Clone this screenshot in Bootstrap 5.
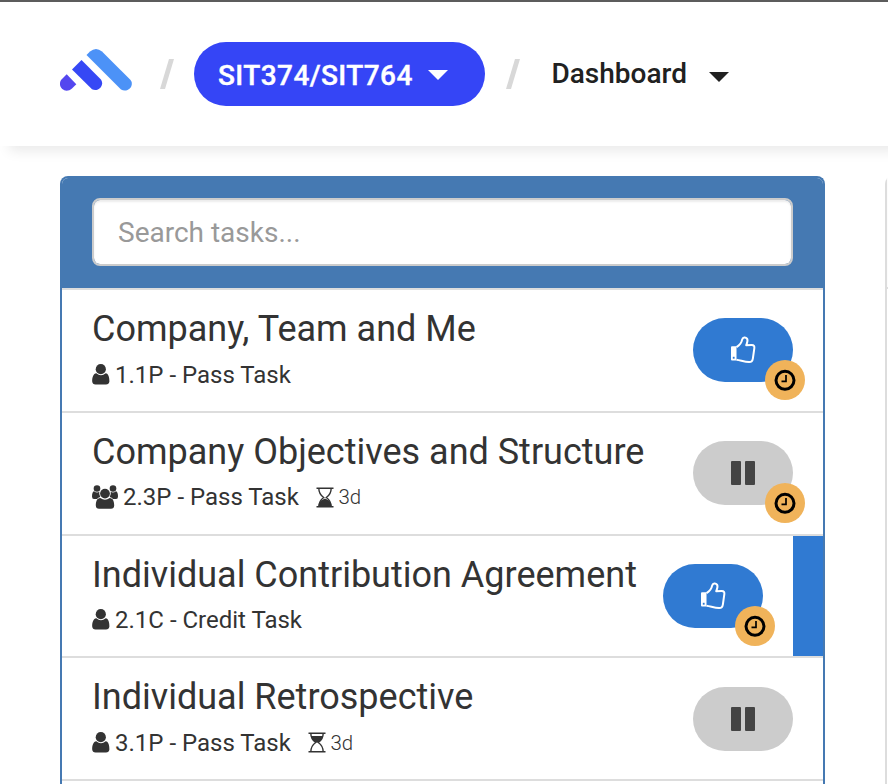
<!DOCTYPE html>
<html lang="en">
<head>
<meta charset="utf-8">
<meta name="viewport" content="width=device-width, initial-scale=1">
<title>Dashboard</title>
<link href="https://cdn.jsdelivr.net/npm/bootstrap@5.3.0/dist/css/bootstrap.min.css" rel="stylesheet">
<style>
body{font-family:Roboto,sans-serif;color:#333;background:#fff;height:784px;overflow:hidden}
.topbar{height:146px;border-top:2px solid #5c5c5c;padding-left:60px;margin-right:-20px;box-shadow:0 14px 12px -9px rgba(0,0,0,.085)}
.logo{margin-top:-9px}
.unit{width:291px;height:64px;background:#3545f6;color:#fff;border-radius:32px;padding-left:24px;margin-left:20px;margin-right:19px;border:0;font-size:28px;font-weight:500}
.unit-name{-webkit-text-stroke:.4px #fff;letter-spacing:.4px;padding-top:3px}
.unit svg{margin-left:15px;margin-top:1px}
.view{font-size:28px;font-weight:500;color:#212121;margin-left:31.5px}
.view svg{margin-left:22px;margin-top:6px}
.panel{width:765px;height:608px;overflow:hidden;border:2px solid #4579b2;border-bottom:0;border-radius:8px 8px 0 0;margin:30px 0 0 60px}
.panel-top{height:110px;background:#4579b2;padding:20px 30px 0}
.search{height:68px;border:2px solid #ccc;border-radius:8px;padding:0 24px;font-size:28px;box-shadow:inset 0 2px 2px rgba(0,0,0,.075)!important;line-height:64px}
.search::placeholder{color:#999}
.task{height:122.75px;border-top:2px solid #ddd;padding:0 30px}
.task.active{background:linear-gradient(#307ad2,#307ad2) right/30px 100% no-repeat;padding-right:60px}
.task-edge{border-top:2px solid #ddd}
.title{font-size:36px;line-height:40px;margin:19px 0 0;font-weight:400;white-space:nowrap}
.sub{font-size:24px;line-height:34px;margin-top:8.6px;height:34px;white-space:nowrap}
.code{margin-left:5px}
.glass{margin-left:17px}
.due{font-size:20.4px;font-weight:300;margin-left:4.5px}
.state{width:100px;height:64px;border-radius:32px;margin-top:28.3px;background:#307ad2}
.state.hold{background:#ccc}
.clock{left:72px;top:42px}
.side{width:40px;height:608px;margin:30px 0 0 60px;border:2px solid #ddd;border-bottom:0;border-radius:8px 8px 0 0}
.side div{height:111px;border-bottom:2px solid #ddd;background:#fcfcfc}
</style>
<script src="https://cdn.jsdelivr.net/npm/bootstrap@5.3.0/dist/js/bootstrap.bundle.min.js"></script>
</head>
<body>
<svg class="d-none">
<symbol id="thumb" viewBox="0 0 26 28"><path d="M2 10.300H6.500V24.400H2Q1 24.400 1 23.400V11.300Q1 10.300 2 10.300Z" fill="#fff"/><rect x="2.800" y="20.800" width="1.800" height="1.900" fill="#307ad2"/><path d="M6.500 11.200C10 9 11.600 6.800 12.100 3.700C12.600 1.200 15.700 .9 17 2.700C18.500 4.800 16.700 7.200 16.200 9.300L21.500 9C24 8.900 24.700 10.200 24.300 12.300L22.900 22.300C22.600 24.800 21.500 26.100 19 26C14.700 25.900 10.700 24.300 6.500 23.700" fill="none" stroke="#fff" stroke-width="2" stroke-linejoin="round"/></symbol>
<symbol id="clock" viewBox="0 0 40 40"><circle cx="20" cy="20" r="20" fill="#f0b35a"/><circle cx="20" cy="20.300" r="9" fill="none" stroke="#000" stroke-width="3"/><path d="M21 15V21.400H16.500" fill="none" stroke="#000" stroke-width="1.700"/></symbol>
<symbol id="pause" viewBox="0 0 24 24"><rect width="10" height="24" rx="1" fill="#444"/><rect x="14" width="10" height="24" rx="1" fill="#444"/></symbol>
<symbol id="user" viewBox="0 0 18 22"><path d="M4.300 9.300Q9 13 13.700 9.300C16.500 9.600 17.500 13.500 17.400 17.500Q17 20.500 14 20.500H3.500Q.5 20.500 .2 17.500C.1 13.500 1.300 9.500 4.300 9.300Z" fill="#333"/><circle cx="8.800" cy="5.200" r="5.100" fill="#333"/></symbol>
<symbol id="users" viewBox="0 0 26 24"><g fill="#333"><circle cx="5" cy="3.500" r="3.300"/><circle cx="21" cy="3.500" r="3.300"/><path d="M2 6.300Q5 8.500 7.300 6.800Q6.700 9.500 8.300 12Q6 12.300 5 14H2Q0 14 0 11.500Q0 7 2 6.300ZM24 6.300Q21 8.500 18.700 6.800Q19.300 9.500 17.700 12Q20 12.300 21 14H24Q26 14 26 11.500Q26 7 24 6.300Z"/><circle cx="13" cy="8.600" r="4.900"/><path d="M8.300 12.900Q13 16.500 17.700 12.900C21 12.900 22.200 16.500 22.200 20.500Q22 23.800 19 23.800H7Q4 23.800 3.800 20.500C3.800 16.500 5 12.900 8.300 12.900Z"/></g></symbol>
<symbol id="glass" viewBox="0 0 18 21"><path d="M.5 1.200H17.500M.5 19.800H17.500M2.800 1C2.800 6 4.500 8.300 7.700 10.500C4.500 12.700 2.800 15 2.800 20M15.200 1C15.200 6 13.500 8.300 10.300 10.500C13.500 12.700 15.200 15 15.200 20" fill="none" stroke="#333" stroke-width="1.400"/></symbol>
</svg>
<header class="topbar d-flex align-items-center">
<svg class="logo" width="74" height="44" viewBox="60 48 74 44"><path d="M86.500 55L90 51.500Q96 46.500 102 51.500L130.300 79.800C135 85 128 93.500 121 89.500Z" fill="#4c92f7"/><path d="M72 69.500L81.500 60L100.200 78.700C105.500 84 99 92.500 92 89.200Z" fill="#3648f5"/><path d="M66.700 74.200L76.300 84.300L72 88.500C65 94.500 57 87 61 80Z" fill="#5447ef"/></svg>
<svg width="16" height="32" viewBox="0 0 16 32" class="ms-4"><path d="M2 31L11 1H16L7 31Z" fill="#d8d8d8"/></svg>
<button class="unit d-flex align-items-center" type="button"><span class="unit-name">SIT374/SIT764</span><svg width="20" height="10"><path d="M0 0H20L10 10Z" fill="#fff"/></svg></button>
<svg width="16" height="32" viewBox="0 0 16 32"><path d="M2 31L11 1H16L7 31Z" fill="#d8d8d8"/></svg>
<div class="view d-flex align-items-center"><span class="view-name">Dashboard</span><svg width="20" height="10"><path d="M0 0H20L10 10Z" fill="#212121"/></svg></div>
</header>
<main class="d-flex">
<section class="panel flex-shrink-0">
<div class="panel-top"><input class="form-control search" placeholder="Search tasks..." aria-label="Search tasks"></div>
<div class="task d-flex justify-content-between"><div><h2 class="title">Company, Team and Me</h2><div class="sub d-flex align-items-center"><svg width="18" height="22"><use href="#user"/></svg><span class="code">1.1P - Pass Task</span></div></div><div class="state position-relative d-flex align-items-center justify-content-center"><svg width="26" height="28"><use href="#thumb"/></svg><svg class="clock position-absolute" width="40" height="40"><use href="#clock"/></svg></div></div>
<div class="task d-flex justify-content-between"><div><h2 class="title">Company Objectives and Structure</h2><div class="sub d-flex align-items-center"><svg width="26" height="24"><use href="#users"/></svg><span class="code">2.3P - Pass Task</span><svg class="glass" width="18" height="21"><path d="M2.500 19.500Q3 14 6 13L9 11.500L12 13Q15 14 15.500 19.500Z" fill="#333"/><use href="#glass"/></svg><span class="due">3d</span></div></div><div class="state hold position-relative d-flex align-items-center justify-content-center"><svg width="24" height="24"><use href="#pause"/></svg><svg class="clock position-absolute" width="40" height="40"><use href="#clock"/></svg></div></div>
<div class="task active d-flex justify-content-between"><div><h2 class="title">Individual Contribution Agreement</h2><div class="sub d-flex align-items-center"><svg width="18" height="22"><use href="#user"/></svg><span class="code">2.1C - Credit Task</span></div></div><div class="state position-relative d-flex align-items-center justify-content-center"><svg width="26" height="28"><use href="#thumb"/></svg><svg class="clock position-absolute" width="40" height="40"><use href="#clock"/></svg></div></div>
<div class="task d-flex justify-content-between"><div><h2 class="title">Individual Retrospective</h2><div class="sub d-flex align-items-center"><svg width="18" height="22"><use href="#user"/></svg><span class="code">3.1P - Pass Task</span><svg class="glass" width="18" height="21"><path d="M3 4H15Q14 8 10 10.500H8Q4 8 3 4Z" fill="#333"/><use href="#glass"/></svg><span class="due">3d</span></div></div><div class="state hold d-flex align-items-center justify-content-center"><svg width="24" height="24"><use href="#pause"/></svg></div></div>
<div class="task-edge"></div>
</section>
<aside class="side flex-shrink-0"><div></div></aside>
</main>
</body>
</html>
